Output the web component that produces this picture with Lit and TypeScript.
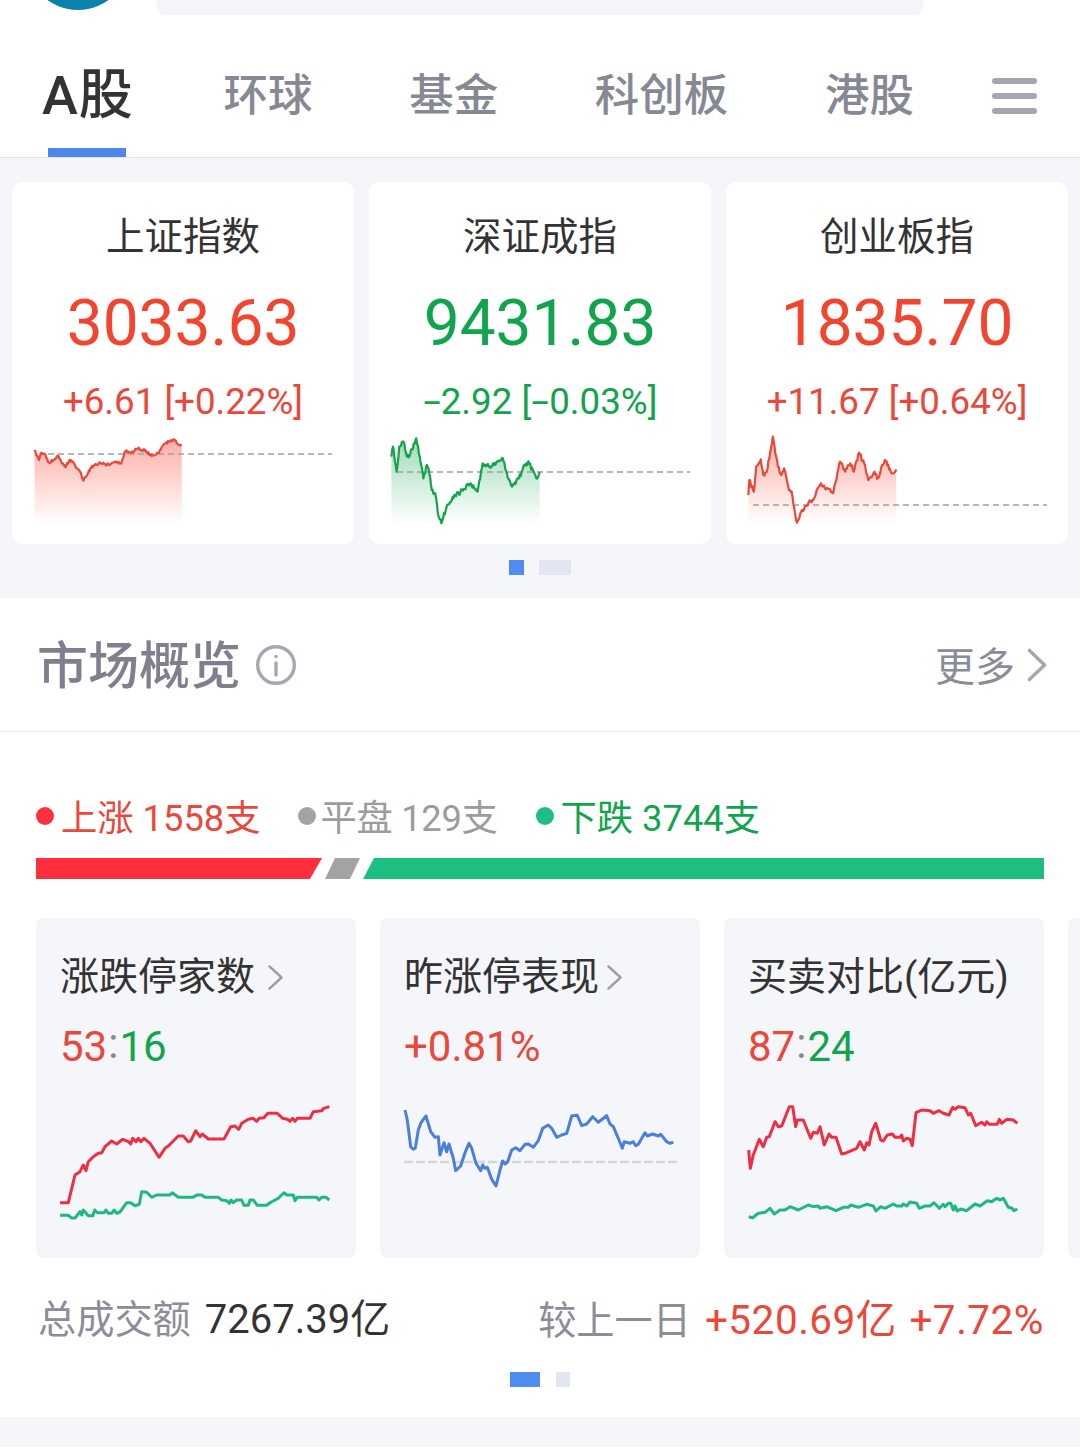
import { LitElement, html, svg, css } from "lit";
import { customElement } from "lit/decorators.js";

type P = [number, number];
const RED = "#e9483a";
const GREEN = "#12a44c";

/* traced from the reference: [x, y] in zoomed pixels */
const idx1: P[] = [[100,840],[105,855],[113,870],[120,848],[132,855],[142,878],[155,870],[170,858],[180,880],[190,892],[200,872],[212,875],[222,895],[232,905],[242,932],[250,920],[262,895],[275,885],[300,878],[310,885],[325,878],[340,875],[352,880],[362,845],[385,845],[400,835],[420,842],[440,858],[458,850],[480,820],[490,815],[505,808],[515,822],[527,826]];
const idx2: P[] = [[1135,860],[1140,830],[1150,905],[1158,830],[1170,815],[1180,860],[1190,850],[1207,805],[1220,880],[1228,925],[1238,885],[1245,910],[1252,960],[1262,970],[1270,1030],[1280,1060],[1295,1010],[1315,985],[1340,960],[1365,940],[1385,965],[1400,880],[1420,890],[1440,875],[1458,865],[1470,910],[1485,950],[1505,925],[1520,885],[1535,880],[1555,925],[1565,905]];
const idx3: P[] = [[604,975],[607,930],[620,965],[627,890],[640,868],[648,915],[660,895],[675,800],[690,890],[700,915],[708,895],[722,960],[730,965],[745,1058],[760,1020],[790,990],[815,940],[850,970],[870,875],[885,905],[900,880],[910,905],[925,848],[940,880],[952,930],[970,905],[980,925],[1000,870],[1020,910],[1033,898]];

const a1: P[] = [[180,368],[205,368],[225,285],[240,275],[250,255],[258,272],[265,245],[280,230],[295,220],[305,218],[315,200],[335,183],[350,192],[368,178],[385,185],[392,192],[398,175],[408,185],[415,175],[423,185],[432,175],[450,190],[477,232],[495,205],[505,198],[525,178],[535,168],[550,168],[565,185],[572,183],[587,152],[600,170],[607,162],[625,177],[672,177],[692,140],[705,138],[716,148],[725,130],[745,118],[760,115],[770,124],[778,115],[792,113],[803,100],[832,100],[848,115],[862,118],[870,124],[878,115],[885,124],[892,115],[930,115],[940,95],[965,92],[970,86],[988,80]];
const a2: P[] = [[180,406],[205,406],[215,414],[225,414],[240,395],[245,405],[250,390],[265,407],[278,407],[284,390],[292,398],[312,398],[318,390],[325,400],[335,400],[342,390],[350,400],[360,396],[380,368],[392,368],[405,377],[418,373],[425,335],[440,337],[455,352],[470,345],[510,345],[517,338],[535,352],[580,352],[590,345],[605,345],[615,352],[655,352],[665,360],[680,362],[688,370],[693,360],[700,368],[710,360],[725,360],[732,376],[745,376],[750,360],[760,360],[772,376],[800,376],[810,368],[825,360],[835,355],[852,338],[860,345],[880,345],[885,362],[892,352],[950,352],[957,360],[965,352],[978,352],[988,360]];
const b1: P[] = [[105,90],[112,120],[122,200],[130,208],[136,204],[145,150],[153,128],[168,108],[182,155],[195,172],[205,170],[210,225],[222,188],[230,215],[237,192],[250,235],[257,272],[272,258],[285,218],[297,190],[305,205],[318,250],[332,272],[338,255],[345,265],[352,262],[365,298],[378,318],[390,270],[398,243],[406,252],[413,245],[425,210],[437,203],[450,212],[465,193],[475,192],[490,202],[505,182],[518,145],[535,135],[545,145],[560,172],[575,165],[590,160],[605,108],[622,106],[635,137],[650,132],[668,110],[685,127],[710,107],[720,132],[730,140],[745,175],[757,205],[763,185],[780,190],[790,185],[797,197],[805,193],[825,158],[832,168],[848,162],[865,168],[872,163],[890,185],[900,190],[910,187]];
const c1: P[] = [[116,210],[121,265],[130,225],[148,178],[160,200],[170,172],[178,170],[195,125],[205,140],[215,138],[238,80],[248,80],[257,140],[262,120],[280,120],[302,175],[310,157],[322,160],[330,140],[343,195],[357,162],[365,172],[378,172],[395,222],[405,220],[440,205],[450,185],[463,210],[470,188],[477,195],[485,155],[497,130],[512,180],[520,183],[532,165],[547,162],[555,172],[570,172],[575,165],[580,183],[590,175],[600,178],[607,197],[618,98],[635,90],[660,92],[670,100],[687,92],[700,100],[717,105],[728,82],[735,88],[745,80],[765,83],[775,105],[782,100],[797,137],[815,127],[825,135],[830,125],[838,133],[862,133],[868,118],[875,130],[890,118],[910,120],[922,130]];
const c2: P[] = [[116,410],[128,413],[145,400],[165,397],[180,385],[193,402],[210,390],[225,390],[240,380],[265,390],[295,375],[310,380],[325,378],[330,385],[350,380],[378,392],[400,382],[415,382],[422,375],[445,382],[470,373],[490,378],[498,393],[512,380],[525,385],[550,372],[560,378],[575,378],[580,372],[590,378],[600,366],[620,370],[628,385],[645,378],[660,378],[672,368],[688,385],[700,373],[705,380],[715,370],[722,370],[730,390],[735,378],[742,393],[752,387],[770,392],[795,372],[810,378],[832,362],[845,365],[860,355],[870,360],[880,355],[895,382],[905,384],[912,392],[922,387]];

/* deterministic fine jitter, so index lines have the tick-level noise of the reference */
function noisy(pts: P[], amp: number, seed: number): P[] {
  let s = seed;
  const rnd = () => { s = (s * 16807) % 2147483647; return (s / 2147483647 - 0.5) * 2; };
  const out: P[] = [];
  for (let i = 0; i < pts.length - 1; i++) {
    const [x0, y0] = pts[i], [x1, y1] = pts[i + 1];
    const n = Math.max(1, Math.round((x1 - x0) / 0.9));
    for (let k = 0; k < n; k++) {
      const t = k / n;
      out.push([x0 + (x1 - x0) * t, y0 + (y1 - y0) * t + (k ? rnd() * amp : 0)]);
    }
  }
  out.push(pts[pts.length - 1]);
  return out;
}
const str = (pts: P[]) => pts.map(([x, y]) => `${x.toFixed(1)},${y.toFixed(1)}`).join(" ");
/* Index-card chart: local coords = page coords minus card origin (x) and chart top (y = 430) */
const toIdx = (pts: P[], xOff: number, cardX: number): P[] =>
  pts.map(([x, y]) => [x / 2.9 + xOff - cardX, y / 3 + 170 - 430] as P);
/* Overview chart: local coords = page coords minus card origin (x) and chart top (y = 1090) */
const toOv = (pts: P[], xOff: number, cardX: number): P[] =>
  pts.map(([x, y]) => [x / 3 + xOff - cardX, y / 3 + 1080 - 1090] as P);

interface Idx { id: string; name: string; val: string; chg: string; up: boolean; color: string; pts: P[]; base: number; x0: number; x1: number; top: string; }
const indices: Idx[] = [
  { id: "g1", name: "上证指数", val: "3033.63", chg: "+6.61 [+0.22%]", up: true, color: RED, pts: noisy(toIdx(idx1, 0, 12), 1.3, 77), base: 24, x0: 36, x1: 320, top: "#fdaea5" },
  { id: "g2", name: "深证成指", val: "9431.83", chg: "", up: false, color: GREEN, pts: noisy(toIdx(idx2, 0, 369), 2.4, 991), base: 42, x0: 28, x1: 321, top: "#9fdab8" },
  { id: "g3", name: "创业板指", val: "1835.70", chg: "+11.67 [+0.64%]", up: true, color: RED, pts: noisy(toIdx(idx3, 540, 726), 2.2, 4242), base: 75, x0: 27, x1: 321, top: "#fbaea5" },
];

@customElement("app-root")
export class AppRoot extends LitElement {
  static styles = css`
    :host { display: block; width: 1080px; height: 1449px; overflow: hidden; background: #fff;
      font-family: Roboto, "Noto Sans CJK SC", sans-serif; color: #333; }
    .top { display: flex; align-items: flex-start; height: 44px; overflow: hidden; padding-left: 26px; }
    .logo { flex: none; width: 104px; height: 104px; margin-top: -94px; margin-right: 27px; border-radius: 50%;
      background: radial-gradient(circle at 50% 85%, #0a87ad, #0b6f9c); }
    .search { flex: none; width: 766px; height: 15px; background: #f3f5fb; border-radius: 0 0 8px 8px; }

    .tabs { display: flex; align-items: center; height: 103px; border-bottom: 1px solid #e4e5e9; padding: 0 43px 10px 42px; }
    .tablist { display: flex; justify-content: space-between; align-items: center; width: 872px; }
    .tab { position: relative; font-size: 44.5px; line-height: 60px; font-weight: 500; color: #868894; }
    .tab.on { font-size: 54px; color: #333; letter-spacing: 1px; margin-right: -7px; }
    .tab.on::after { content: ""; position: absolute; left: 6px; top: 82px; width: 78px; height: 9px; background: #4f86ec; }
    .menu { display: flex; flex-direction: column; gap: 9px; margin-left: auto; }
    .menu i { display: block; width: 45px; height: 6px; border-radius: 3px; background: #a5a6b2; }

    .market { background: #f5f6fa; padding: 24px 12px 23px; }
    .cards { display: flex; gap: 15px; }
    .card { flex: none; width: 342px; height: 362px; box-sizing: border-box; background: #fff; border-radius: 10px;
      display: flex; flex-direction: column; align-items: center; padding-top: 30px; }
    .name { font-size: 38.5px; line-height: 50px; color: #333; }
    .val { font-size: 64px; line-height: 70px; margin-top: 27px; }
    .val.r { color: #f2452f; }
    .chg { font-size: 36.7px; line-height: 44px; margin-top: 21px; white-space: pre; }
    .dash { display: inline-block; margin: 0 4px; transform: scaleX(1.7); }
    .card svg { display: block; flex: none; margin-top: 6px; }

    .dots { display: flex; justify-content: center; }
    .dots.a { gap: 15px; margin-top: 16px; }
    .dots i { display: block; height: 15px; }
    .dots .cur { background: #4f8cf0; }
    .dots .off { background: #e3e5f2; }
    .a .cur { width: 15px; } .a .off { width: 32px; }
    .dots.b { gap: 16px; margin-top: 31px; }
    .b .cur { width: 30px; } .b .off { width: 14px; }

    .head { display: flex; align-items: center; height: 133px; border-bottom: 1px solid #e9e9ec; padding: 0 32px 0 38px; }
    .head h2 { margin: 5px 0 0 -1px; font-size: 51px; line-height: 60px; font-weight: 500; color: #7e808f; }
    .info { margin-left: 14px; display: block; }
    .more { margin-left: auto; display: flex; align-items: center; gap: 11px; font-size: 40px; line-height: 50px; color: #8a8c98; }
    .more span { position: relative; top: 3px; }

    .legend { display: flex; gap: 38px; margin: 60px 0 0 36px; height: 46px; align-items: center; font-size: 36.3px; white-space: pre; }
    .leg { display: flex; align-items: center; gap: 7px; }
    .leg.mut { gap: 5px; letter-spacing: -.3px; margin-left: -1px; }
    .leg i { display: block; width: 18px; height: 18px; border-radius: 50%; margin-top: 2px; }
    .bar { display: block; margin: 20px 0 0 36px; }

    .row { display: flex; gap: 24px; margin: 39px 0 0 36px; width: 1044px; overflow: hidden; }
    .mini { flex: none; width: 320px; height: 340px; box-sizing: border-box; background: #f5f6fa; border-radius: 8px; padding: 36px 0 0 24px; }
    .mini svg.chart { display: block; margin: 20px 0 0 -24px; }
    .mtitle { display: flex; align-items: center; gap: 12px; font-size: 39px; line-height: 46px; color: #333; white-space: nowrap; }
    .mtitle.tight { gap: 7px; }
    .mval { margin-top: 24px; font-size: 42px; line-height: 46px; display: flex; }
    .colon { color: #888; margin: -3px 1px 0; }

    .foot { display: flex; justify-content: space-between; margin: 33px 36px 0 38px; height: 50px; align-items: center; font-size: 38.2px; white-space: pre; }
    .foot .g { color: #8c8d98; }
    .foot .n { font-size: 40px; margin-left: 14px; }
    .foot .n.w { font-size: 40.5px; letter-spacing: .5px; word-spacing: 2px; }
    .strip { height: 30px; margin-top: 30px; background: #f5f6fa; }

    .r { color: #e9483a; } .gr { color: #12a44c; } .mut { color: #9c9c9c; }
  `;

  private chev(w: number, h: number, sw: number, color: string) {
    return html`<svg width=${w} height=${h} viewBox="0 0 ${w} ${h}" fill="none" stroke=${color} stroke-width=${sw}>
      <polyline points="${sw},${sw} ${w - sw},${h / 2} ${sw},${h - sw}" stroke-linecap="round" stroke-linejoin="round"/></svg>`;
  }

  private idxChart(d: Idx) {
    const first = d.pts[0], last = d.pts[d.pts.length - 1];
    const area = `${str(d.pts)} ${last[0].toFixed(1)},94 ${first[0].toFixed(1)},94`;
    return html`<svg width="342" height="100" viewBox="0 0 342 100" fill="none">
      <defs><linearGradient id=${d.id} x1="0" y1="0" x2="0" y2="1">
        <stop offset="0" stop-color=${d.top}/><stop offset="1" stop-color="#fff"/></linearGradient></defs>
      <polygon points=${area} fill="url(#${d.id})"/>
      <line x1=${d.x0} x2=${d.x1} y1=${d.base} y2=${d.base} stroke="#a0a0a0" stroke-width="1.6" stroke-dasharray="6 4"/>
      <polyline points=${str(d.pts)} stroke=${d.color} stroke-width="2.2" stroke-linejoin="round"/>
    </svg>`;
  }

  private ovChart(lines: { pts: P[]; color: string }[], dash?: boolean) {
    return html`<svg class="chart" width="320" height="140" viewBox="0 0 320 140" fill="none">
      ${dash ? svg`<line x1="24" x2="297" y1="72" y2="72" stroke="#d5d6da" stroke-width="2.4" stroke-dasharray="9 3"/>` : ""}
      ${lines.map((l) => svg`<polyline points=${str(l.pts)} stroke=${l.color} stroke-width="3" stroke-linejoin="round"/>`)}
    </svg>`;
  }

  render() {
    const red2 = "#ec2f42", grn2 = "#1fb97f", blue = "#4a7fdb";
    return html`
      <div class="top"><div class="logo"></div><div class="search"></div></div>
      <div class="tabs">
        <div class="tablist">
          <div class="tab on">A股</div><div class="tab">环球</div><div class="tab">基金</div><div class="tab">科创板</div><div class="tab">港股</div>
        </div>
        <div class="menu"><i></i><i></i><i></i></div>
      </div>

      <section class="market">
        <div class="cards">
          ${indices.map((d) => html`<div class="card">
            <div class="name">${d.name}</div>
            <div class="val ${d.up ? "r" : "gr"}">${d.val}</div>
            <div class="chg ${d.up ? "r" : "gr"}">${d.chg || html`<span class="dash">-</span>2.92 [<span class="dash">-</span>0.03%]`}</div>
            ${this.idxChart(d)}
          </div>`)}
        </div>
        <div class="dots a"><i class="cur"></i><i class="off"></i></div>
      </section>

      <div class="head">
        <h2>市场概览</h2>
        <svg class="info" width="42" height="42" viewBox="0 0 42 42" fill="none" stroke="#a5a7b2" stroke-width="3.4">
          <circle cx="21" cy="21" r="18.3"/>
          <line x1="21" y1="19" x2="21" y2="31" stroke-linecap="round"/>
          <circle cx="21" cy="12.5" r="1.8" fill="#a5a7b2" stroke="none"/>
        </svg>
        <div class="more"><span>更多</span>${this.chev(22, 36, 3.4, "#a5a6b2")}</div>
      </div>

      <div class="legend">
        <div class="leg r"><i style="background:#ff3040"></i>上涨 1558支</div>
        <div class="leg mut"><i style="background:#a3a3a3"></i>平盘 129支</div>
        <div class="leg gr"><i style="background:#1dbf80"></i>下跌 3744支</div>
      </div>
      <svg class="bar" width="1008" height="21" viewBox="0 0 1008 21">
        <polygon points="0,0 286,0 274,21 0,21" fill="#ff2f3e"/>
        <polygon points="299,0 324,0 314,21 289,21" fill="#a3a3a3"/>
        <polygon points="338,0 1008,0 1008,21 327,21" fill="#1dbf80"/>
      </svg>

      <div class="row">
        <div class="mini">
          <div class="mtitle">涨跌停家数${this.chev(17, 27, 2.4, "#9b9ca8")}</div>
          <div class="mval"><span class="r">53</span><span class="colon">:</span><span class="gr">16</span></div>
          ${this.ovChart([{ pts: toOv(a1, 0, 36), color: red2 }, { pts: toOv(a2, 0, 36), color: grn2 }])}
        </div>
        <div class="mini">
          <div class="mtitle tight">昨涨停表现${this.chev(17, 27, 2.4, "#9b9ca8")}</div>
          <div class="mval"><span class="r">+0.81%</span></div>
          ${this.ovChart([{ pts: toOv(b1, 370, 380), color: blue }], true)}
        </div>
        <div class="mini">
          <div class="mtitle">买卖对比(亿元)</div>
          <div class="mval"><span class="r">87</span><span class="colon">:</span><span class="gr">24</span></div>
          ${this.ovChart([{ pts: toOv(c1, 710, 724), color: red2 }, { pts: toOv(c2, 710, 724), color: grn2 }])}
        </div>
        <div class="mini"></div>
      </div>

      <div class="foot">
        <div><span class="g">总成交额</span><span class="n">7267.39亿</span></div>
        <div><span class="g">较上一日</span><span class="r n w">+520.69亿 +7.72%</span></div>
      </div>
      <div class="dots b"><i class="cur"></i><i class="off"></i></div>
      <div class="strip"></div>
    `;
  }
}
